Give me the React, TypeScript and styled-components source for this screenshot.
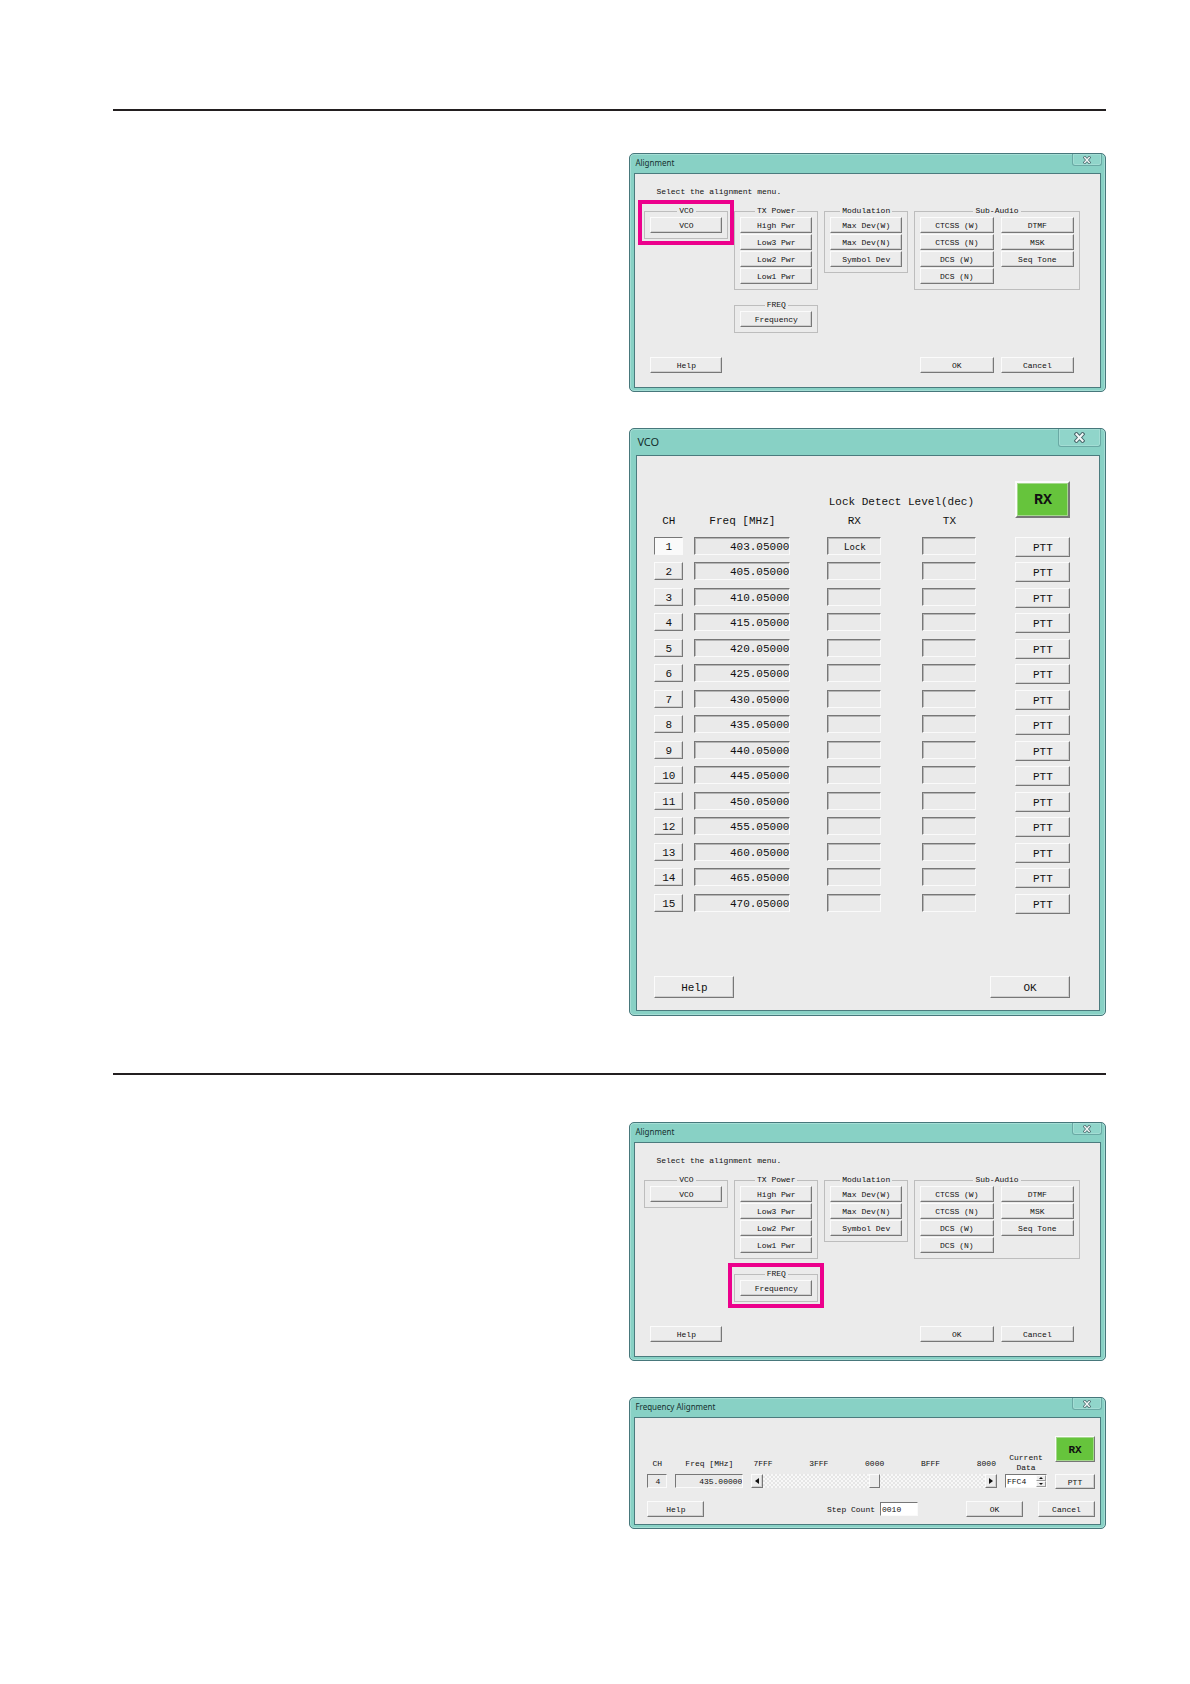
import React, { useState } from "react";
import styled, { createGlobalStyle, css } from "styled-components";

const mono = `"Liberation Mono", "Courier New", monospace`;
const sans = `"Noto Sans", "Segoe UI", sans-serif`;

const GlobalStyle = createGlobalStyle`
  *, *::before, *::after { box-sizing: border-box; }
  body { margin: 0; background: #fff; color: #111; font-family: ${mono}; }
`;

const Page = styled.main`
  padding: 109px 84px 155px 113px;
`;

const Rule = styled.hr`
  height: 2px;
  margin: 0;
  border: 0;
  background: #231f20;
`;

const Figures = styled.section<{ $top: number; $bottom?: number }>`
  display: flex;
  flex-direction: column;
  gap: 36px;
  width: 48%;
  margin-left: auto;
  padding: ${(p) => p.$top}px 0 ${(p) => p.$bottom ?? 0}px;
`;

const Frame = styled.article<{ $large?: boolean }>`
  border: 1px solid #47777b;
  border-radius: 5px;
  padding: ${(p) => (p.$large ? "0 5px 4px 6px" : "0 4px 3px")};
  background: #88d1c5;
  box-shadow: inset 0 0 0 1px #a5ded5;
`;

const TitleBar = styled.header<{ $large?: boolean }>`
  display: flex;
  justify-content: space-between;
  align-items: flex-start;
  height: ${(p) => (p.$large ? 26 : 19)}px;
`;

const Title = styled.h2<{ $large?: boolean }>`
  margin: 0;
  padding-left: 1px;
  font: 400 ${(p) => (p.$large ? 11 : 8)}px/${(p) => (p.$large ? 26 : 18)}px ${sans};
  color: #14302f;
`;

const CloseButton = styled.button<{ $large?: boolean }>`
  display: flex;
  align-items: center;
  justify-content: center;
  width: ${(p) => (p.$large ? 43 : 30)}px;
  height: ${(p) => (p.$large ? 18 : 12)}px;
  margin-right: -1px;
  padding: 0;
  border: 1px solid #6aa9a4;
  border-top: 0;
  border-radius: 0 0 3px 3px;
  background: #90d5ca;
  box-shadow: inset 0 0 0 1px #a3ddd4;
`;

const Client = styled.div<{ $pad: string }>`
  border: 1px solid #4b7b7e;
  padding: ${(p) => p.$pad};
  background: #ebebeb;
`;

const raised = css`
  border: 1px solid;
  border-color: #fbfbfb #777 #777 #fbfbfb;
  box-shadow: inset -1px -1px 0 #cfcfcf;
`;

const sunken = css`
  border: 1px solid;
  border-color: #777 #fafafa #fafafa #777;
`;

const Button = styled.button<{ $large?: boolean }>`
  ${raised}
  display: block;
  width: 100%;
  height: ${(p) => (p.$large ? 20 : 16)}px;
  padding: 2px 0 0;
  background: #ececec;
  color: inherit;
  font: 400 ${(p) => (p.$large ? 11 : 8)}px/12px ${mono};
  white-space: nowrap;
`;

const FooterButton = styled(Button)`
  width: ${(p) => (p.$large ? 80 : 57)}px;
  height: ${(p) => (p.$large ? 22 : 16)}px;
`;

const StateButton = styled(Button)`
  height: ${(p) => (p.$large ? 37 : 26)}px;
  background: #66c43c;
  font-size: ${(p) => (p.$large ? 15 : 11)}px;
  font-weight: 700;
  border-width: ${(p) => (p.$large ? 2 : 1)}px;
  box-shadow: inset 0 0 0 1px #a4d88c;
`;

/* Alignment menu */

const Prompt = styled.p`
  margin: 0 0 9px 12px;
  font-size: 8px;
  line-height: 10px;
`;

const MenuGrid = styled.div`
  display: grid;
  grid-template-columns: 84fr 84fr 84fr 166fr;
  column-gap: 6px;
  align-items: start;
`;

const MenuColumn = styled.div`
  display: flex;
  flex-direction: column;
  gap: 10px;
`;

const Group = styled.fieldset<{ $marked?: boolean }>`
  min-width: 0;
  margin: 0;
  padding: 1px 5px 5px;
  border: 1px solid #bdbdbd;
  ${(p) => p.$marked && css`
    outline: 4px solid #ec008c;
    outline-offset: 2px;
  `}
`;

const Legend = styled.legend`
  margin: 0 auto;
  padding: 0 2px;
  font-size: 8px;
  line-height: 10px;
`;

const ButtonColumns = styled.div<{ $count: number }>`
  display: grid;
  grid-template-columns: repeat(${(p) => p.$count}, 1fr);
  column-gap: 7px;
`;

const ButtonStack = styled.div`
  display: flex;
  flex-direction: column;
  gap: 1px;
`;

const MenuFooter = styled(MenuGrid)`
  padding-top: 24px;
`;

const FooterCell = styled.div<{ $column: number }>`
  grid-column: ${(p) => p.$column};
  padding: 0 6px;
`;

/* VCO table */

const ChannelTable = styled.table`
  width: 100%;
  table-layout: fixed;
  border-collapse: collapse;
  font-size: 11px;
  line-height: 12px;

  th, td {
    padding: 0;
    font-weight: 400;
    text-align: center;
    vertical-align: top;
    white-space: nowrap;
  }
  tbody tr { height: 25px; }
  tbody tr:nth-child(even) { height: 26px; }
`;

const Col = styled.col<{ $w: number }>`
  width: ${(p) => p.$w}px;
`;

const Slot = styled.div<{ $gap: number; $top?: number; $height?: number }>`
  padding: ${(p) => p.$top ?? 0}px ${(p) => p.$gap}px 0 0;
  height: ${(p) => (p.$height ? `${p.$height}px` : "auto")};
`;

const ChannelButton = styled(Button)<{ $pressed: boolean }>`
  height: 18px;
  ${(p) => p.$pressed && css`
    ${sunken}
    background: #fafafa;
    box-shadow: none;
  `}
`;

const Field = styled.input<{ $large?: boolean; $align?: string; $white?: boolean; $status?: boolean }>`
  ${sunken}
  display: block;
  width: 100%;
  height: ${(p) => (p.$large ? 18 : 14)}px;
  padding: 1px 0 0 1px;
  border-radius: 0;
  background: ${(p) => (p.$white ? "#fff" : "#eaeaea")};
  color: inherit;
  font: ${(p) => (p.$status ? `9px "DejaVu Sans Mono", monospace` : `${p.$large ? 11 : 8}px ${mono}`)};
  text-align: ${(p) => p.$align ?? "left"};
  box-shadow: ${(p) => (p.$large ? "inset 1px 1px 0 #b5b5b5" : "none")};
  outline: 0;
`;

const SplitFooter = styled.footer`
  display: flex;
  justify-content: space-between;
  padding-top: 57px;
`;

/* Frequency alignment */

const TuneGrid = styled.div`
  display: grid;
  grid-template-columns: 20px 68px 1fr 42px 40px;
  grid-template-rows: 38px 15px;
  column-gap: 8px;
  font-size: 8px;
  line-height: 10px;
`;

const PttButton = styled(Button)`
  height: 15px;
`;

const Caption = styled.label`
  align-self: end;
  justify-self: center;
  padding-bottom: 5px;
  white-space: nowrap;
`;

const StackedCaption = styled(Caption)`
  padding-bottom: 1px;
  text-align: center;
`;

const Scale = styled.div`
  display: flex;
  align-self: end;
  justify-content: space-between;
  padding: 0 1px 5px 2px;
`;

const ScrollBar = styled.div`
  display: flex;
  height: 14px;
`;

const ArrowButton = styled.button`
  ${raised}
  display: flex;
  align-items: center;
  justify-content: center;
  flex: none;
  width: 12px;
  padding: 0;
  background: #ececec;
`;

const Range = styled.input`
  flex: 1;
  min-width: 0;
  height: 14px;
  margin: 0;
  appearance: none;
  background: repeating-conic-gradient(#e6e6e6 0 25%, #f8f8f8 0 50%) 0 0 / 4px 4px;

  &::-webkit-slider-thumb {
    appearance: none;
    width: 11px;
    height: 14px;
    border: 1px solid;
    border-color: #fbfbfb #777 #777 #fbfbfb;
    background: #ececec;
  }
`;

const Stepper = styled.div`
  ${sunken}
  display: flex;
  height: 14px;
  background: #fff;
`;

const StepperInput = styled.input`
  flex: 1;
  min-width: 0;
  padding: 1px 0 0 1px;
  border: 0;
  background: transparent;
  color: inherit;
  font: 8px ${mono};
  outline: 0;
`;

const StepperButtons = styled.div`
  display: flex;
  flex-direction: column;
  width: 10px;
`;

const StepButton = styled.button`
  display: flex;
  flex: 1;
  align-items: center;
  justify-content: center;
  padding: 0;
  border: 1px solid;
  border-color: #fbfbfb #999 #999 #fbfbfb;
  background: #ececec;
`;

const TuneFooter = styled.footer`
  display: flex;
  align-items: center;
  gap: 15px;
  padding-top: 12px;
  font-size: 8px;
`;

const StepCount = styled.label`
  display: flex;
  align-items: center;
  gap: 5px;
  margin: 0 33px 0 auto;
  white-space: nowrap;
`;

const StepCountBox = styled.span`
  width: 38px;
`;

function CrossIcon({ size }: { size: number }) {
  return (
    <svg width={size} height={size} viewBox="0 0 10 10" aria-hidden="true">
      <path d="M2.2 2l5.6 6M7.8 2L2.2 8" stroke="#47666a" strokeWidth="3.6" strokeLinecap="square" />
      <path d="M2.2 2l5.6 6M7.8 2L2.2 8" stroke="#f2f7f7" strokeWidth="1.8" strokeLinecap="square" />
    </svg>
  );
}

function Triangle({ points, width, height }: { points: string; width: number; height: number }) {
  return (
    <svg width={width} height={height} viewBox={`0 0 ${width} ${height}`} aria-hidden="true">
      <polygon points={points} fill="#111" />
    </svg>
  );
}

interface WindowProps {
  title: string;
  pad: string;
  large?: boolean;
  children: React.ReactNode;
}

function Window({ title, pad, large, children }: WindowProps) {
  return (
    <Frame $large={large}>
      <TitleBar $large={large}>
        <Title $large={large}>{title}</Title>
        <CloseButton $large={large} type="button" aria-label={`Close ${title}`}>
          <CrossIcon size={large ? 11 : 8} />
        </CloseButton>
      </TitleBar>
      <Client $pad={pad}>{children}</Client>
    </Frame>
  );
}

interface MenuGroupProps {
  name: string;
  columns: string[][];
  marked?: boolean;
}

function MenuGroup({ name, columns, marked }: MenuGroupProps) {
  return (
    <Group $marked={marked}>
      <Legend>{name}</Legend>
      <ButtonColumns $count={columns.length}>
        {columns.map((items, i) => (
          <ButtonStack key={i}>
            {items.map((item) => (
              <Button key={item} type="button">{item}</Button>
            ))}
          </ButtonStack>
        ))}
      </ButtonColumns>
    </Group>
  );
}

function AlignmentMenu({ marked }: { marked: "VCO" | "FREQ" }) {
  return (
    <Window title="Alignment" pad="13px 20px 14px 9px">
      <Prompt>Select the alignment menu.</Prompt>
      <MenuGrid>
        <MenuGroup name="VCO" columns={[["VCO"]]} marked={marked === "VCO"} />
        <MenuColumn>
          <MenuGroup name="TX Power" columns={[["High Pwr", "Low3 Pwr", "Low2 Pwr", "Low1 Pwr"]]} />
          <MenuGroup name="FREQ" columns={[["Frequency"]]} marked={marked === "FREQ"} />
        </MenuColumn>
        <MenuGroup name="Modulation" columns={[["Max Dev(W)", "Max Dev(N)", "Symbol Dev"]]} />
        <MenuGroup
          name="Sub-Audio"
          columns={[
            ["CTCSS (W)", "CTCSS (N)", "DCS (W)", "DCS (N)"],
            ["DTMF", "MSK", "Seq Tone"],
          ]}
        />
      </MenuGrid>
      <MenuFooter>
        <FooterCell $column={1}>
          <Button type="button">Help</Button>
        </FooterCell>
        <FooterCell $column={4}>
          <ButtonColumns $count={2}>
            <Button type="button">OK</Button>
            <Button type="button">Cancel</Button>
          </ButtonColumns>
        </FooterCell>
      </MenuFooter>
    </Window>
  );
}

const frequencies = [403, 405, 410, 415, 420, 425, 430, 435, 440, 445, 450, 455, 460, 465, 470];

function VcoWindow() {
  const [active, setActive] = useState(1);
  return (
    <Window title="VCO" pad="25px 29px 12px 17px" large>
      <ChannelTable>
        <colgroup>
          <Col $w={40} />
          <Col $w={133} />
          <Col $w={95} />
          <Col $w={93} />
          <Col $w={55} />
        </colgroup>
        <thead>
          <tr>
            <td colSpan={2} />
            <th colSpan={2} scope="colgroup">
              <Slot $gap={40} $top={15} $height={30}>Lock Detect Level(dec)</Slot>
            </th>
            <td rowSpan={2}>
              <StateButton $large type="button">RX</StateButton>
            </td>
          </tr>
          <tr>
            <th scope="col"><Slot $gap={11} $top={4} $height={26}>CH</Slot></th>
            <th scope="col"><Slot $gap={37} $top={4}>Freq [MHz]</Slot></th>
            <th scope="col"><Slot $gap={41} $top={4}>RX</Slot></th>
            <th scope="col"><Slot $gap={39} $top={4}>TX</Slot></th>
          </tr>
        </thead>
        <tbody>
          {frequencies.map((mhz, i) => {
            const ch = i + 1;
            return (
              <tr key={ch}>
                <td>
                  <Slot $gap={11}>
                    <ChannelButton $large type="button" $pressed={active === ch} onClick={() => setActive(ch)}>
                      {ch}
                    </ChannelButton>
                  </Slot>
                </td>
                <td>
                  <Slot $gap={37}>
                    <Field $large $align="right" readOnly value={`${mhz}.05000`} aria-label={`Frequency, channel ${ch}`} />
                  </Slot>
                </td>
                <td>
                  <Slot $gap={41}>
                    <Field $large $align="center" $status readOnly value={active === ch ? "Lock" : ""} aria-label={`RX level, channel ${ch}`} />
                  </Slot>
                </td>
                <td>
                  <Slot $gap={39}>
                    <Field $large $align="center" readOnly value="" aria-label={`TX level, channel ${ch}`} />
                  </Slot>
                </td>
                <td>
                  <Button $large type="button">PTT</Button>
                </td>
              </tr>
            );
          })}
        </tbody>
      </ChannelTable>
      <SplitFooter>
        <FooterButton $large type="button">Help</FooterButton>
        <FooterButton $large type="button">OK</FooterButton>
      </SplitFooter>
    </Window>
  );
}

function FrequencyWindow() {
  return (
    <Window title="Frequency Alignment" pad="18px 5px 7px 12px">
      <TuneGrid>
        <Caption htmlFor="tune-ch">CH</Caption>
        <Caption htmlFor="tune-freq">Freq [MHz]</Caption>
        <Scale>
          {["7FFF", "3FFF", "0000", "BFFF", "8000"].map((mark) => (
            <span key={mark}>{mark}</span>
          ))}
        </Scale>
        <StackedCaption htmlFor="tune-data">Current<br />Data</StackedCaption>
        <StateButton type="button">RX</StateButton>

        <Field id="tune-ch" readOnly value="4" $align="center" />
        <Field id="tune-freq" readOnly value="435.00000" $align="right" />
        <ScrollBar>
          <ArrowButton type="button" aria-label="Decrease">
            <Triangle points="4,0 4,6 0,3" width={4} height={6} />
          </ArrowButton>
          <Range type="range" min={0} max={100} defaultValue={50} aria-label="Frequency adjustment" />
          <ArrowButton type="button" aria-label="Increase">
            <Triangle points="0,0 0,6 4,3" width={4} height={6} />
          </ArrowButton>
        </ScrollBar>
        <Stepper>
          <StepperInput id="tune-data" defaultValue="FFC4" />
          <StepperButtons>
            <StepButton type="button" aria-label="Step up">
              <Triangle points="0,2 4,2 2,0" width={4} height={2} />
            </StepButton>
            <StepButton type="button" aria-label="Step down">
              <Triangle points="0,0 4,0 2,2" width={4} height={2} />
            </StepButton>
          </StepperButtons>
        </Stepper>
        <PttButton type="button">PTT</PttButton>
      </TuneGrid>
      <TuneFooter>
        <FooterButton type="button">Help</FooterButton>
        <StepCount>
          Step Count
          <StepCountBox>
            <Field defaultValue="0010" $white />
          </StepCountBox>
        </StepCount>
        <FooterButton type="button">OK</FooterButton>
        <FooterButton type="button">Cancel</FooterButton>
      </TuneFooter>
    </Window>
  );
}

export default function App() {
  return (
    <>
      <GlobalStyle />
      <Page>
        <Rule />
        <Figures $top={42} $bottom={57}>
          <AlignmentMenu marked="VCO" />
          <VcoWindow />
        </Figures>
        <Rule />
        <Figures $top={47}>
          <AlignmentMenu marked="FREQ" />
          <FrequencyWindow />
        </Figures>
      </Page>
    </>
  );
}
